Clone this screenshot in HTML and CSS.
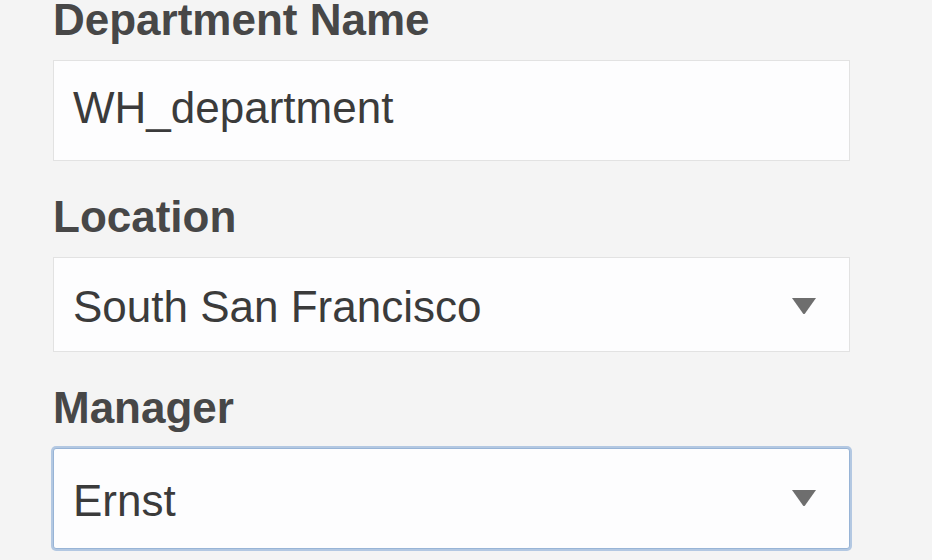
FILE: index.html
```html
<!DOCTYPE html>
<html lang="en">
<head>
    <meta charset="UTF-8">
    <title>Department</title>
    <link rel="stylesheet" href="styles.css">
</head>
<body>
    <form class="form">
        <!-- Nombre -->
        <div class="field">
            <label class="label">Department Name</label>
            <div class="control control-text">WH_department</div>
        </div>

        <!-- Ubicación -->
        <div class="field">
            <label class="label">Location</label>
            <div class="control control-select">
                <span>South San Francisco</span>
                <svg class="arrow" width="26" height="18" viewBox="0 0 26 18"><path d="M1 1 L25 1 L14 16.5 Q13 17.5 12 16.5 Z" fill="#6e6e6e"/></svg>
            </div>
        </div>

        <!-- Responsable -->
        <div class="field">
            <label class="label">Manager</label>
            <div class="control control-select focused">
                <span>Ernst</span>
                <svg class="arrow" width="26" height="18" viewBox="0 0 26 18"><path d="M1 1 L25 1 L14 16.5 Q13 17.5 12 16.5 Z" fill="#6e6e6e"/></svg>
            </div>
        </div>
    </form>
</body>
</html>
```

FILE: styles.css
```css
body {
    margin: 0;
    padding: 1px 0 0;
    background: #f4f4f4;
    font-family: 'Liberation Sans', Arial, sans-serif;
    overflow: hidden;
}

.form {
    width: 797px;
    margin-left: 53px;
}

.field {
    margin-bottom: 37px;
}

.label {
    display: block;
    font-size: 44px;
    font-weight: 700;
    line-height: 38px;
    color: #474747;
    margin-bottom: 21px;
}

/* Cajas de texto y selects */
.control {
    box-sizing: border-box;
    height: 101px;
    padding: 22px 32px 0 19px;
    background: #fdfdfe;
    border: 1px solid #e2e2e2;
    font-size: 44px;
    line-height: 50px;
    color: #3b3b3b;
    display: flex;
    align-items: flex-start;
    justify-content: space-between;
}

.control-select {
    height: 95px;
    padding-top: 24px;
}

.control-select.focused {
    height: 101px;
    padding-top: 27px;
    border-color: #98b4d6;
    border-radius: 3px;
    box-shadow: 0 0 0 2px #b3c8e2;
}

.arrow {
    margin-top: 15px;
}

.focused .arrow {
    margin-top: 13px;
}
```
